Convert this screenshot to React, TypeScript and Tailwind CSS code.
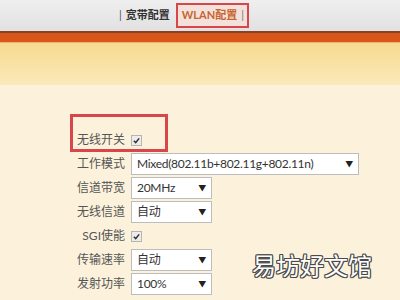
import React from "react";

const font = { fontFamily: 'Lato, "Noto Sans CJK SC", sans-serif' };

function Check() {
  return (
    <span className="flex h-[11px] w-[11px] items-center justify-center border border-[#b5b5b5] bg-[#ececec]">
      <svg viewBox="0 0 10 10" className="h-[9px] w-[9px]">
        <path d="M2 5.2 L4.1 7.3 L8 2.6" fill="none" stroke="#333" strokeWidth="1.6" />
      </svg>
    </span>
  );
}

function Select({ value, w }: { value: string; w: string }) {
  return (
    <div className={`flex h-[22px] ${w} items-center justify-between border border-[#bdbdbd] bg-white pl-[5px] pr-[5px] text-[12px] tracking-[-0.3px] text-[#333]`}>
      <span className="whitespace-nowrap">{value}</span>
      <span className="text-[8px] text-[#222]">▼</span>
    </div>
  );
}

function Row({ label, children }: { label: string; children: React.ReactNode }) {
  return (
    <div className="flex h-[24px] items-center">
      <div className="w-[131px] shrink-0 whitespace-nowrap pr-[6px] text-right text-[12px] text-[#555]">{label}</div>
      {children}
    </div>
  );
}

export default function App() {
  return (
    <div className="relative h-[300px] w-[400px] overflow-hidden bg-[#fcf2dc]" style={font}>
      <div className="flex h-[31px] items-center bg-gradient-to-b from-[#efefef] to-[#e1e1e1] pl-[119px] text-[11px] font-bold text-[#333]">
        <span className="font-normal text-[#555]">|</span>
        <span className="ml-[4px] whitespace-nowrap">宽带配置</span>
        <div className="ml-[6px] flex h-[25px] w-[73px] shrink-0 items-center whitespace-nowrap border-2 border-[#d8464c] bg-[#f3e2dc] pl-[4px]">
          <span className="text-[11px] text-[#c8652e]">WLAN配置</span>
          <span className="ml-[4px] font-normal text-[#777]">|</span>
        </div>
      </div>
      <div className="h-[2px] bg-[#86412a]" />
      <div className="h-[9px] bg-[#d9561b]" />
      <div className="h-[1px] bg-[#f0b070]" />
      <div className="h-[42px] bg-gradient-to-b from-[#f6da8f] to-[#fbe9ba]" />

      <div className="pt-[43px]">
        <Row label="无线开关">
          <Check />
        </Row>
        <Row label="工作模式">
          <Select value="Mixed(802.11b+802.11g+802.11n)" w="w-[228px]" />
        </Row>
        <Row label="信道带宽">
          <Select value="20MHz" w="w-[81px]" />
        </Row>
        <Row label="无线信道">
          <Select value="自动" w="w-[81px]" />
        </Row>
        <Row label="SGI使能">
          <Check />
        </Row>
        <Row label="传输速率">
          <Select value="自动" w="w-[81px]" />
        </Row>
        <Row label="发射功率">
          <Select value="100%" w="w-[81px]" />
        </Row>
      </div>

      <div className="absolute left-[70px] top-[114px] h-[38px] w-[98px] border-[3px] border-[#d8464c]" />

      <div
        className="absolute left-[252px] top-[250px] whitespace-nowrap text-[24px] font-normal leading-[30px] text-white [text-shadow:1px_0_0_#4a4a4a,-1px_0_0_#4a4a4a,0_1px_0_#4a4a4a,0_-1px_0_#4a4a4a,1px_1px_0_#4a4a4a,-1px_-1px_0_#4a4a4a,1px_-1px_0_#4a4a4a,-1px_1px_0_#4a4a4a]"
        style={{ fontFamily: '"Noto Sans CJK SC", sans-serif' }}
      >
        易坊好文馆
      </div>
    </div>
  );
}
